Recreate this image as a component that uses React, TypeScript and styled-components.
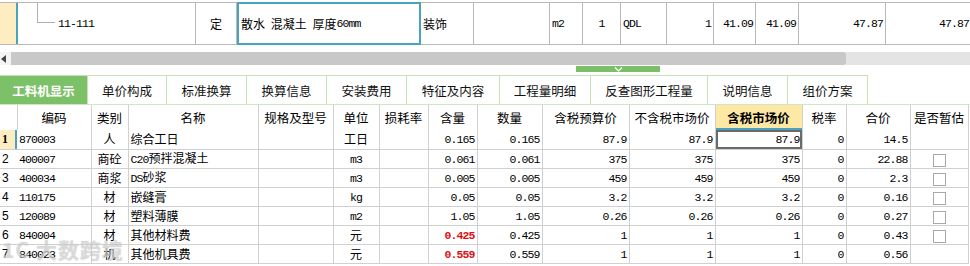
import React from "react";
import styled, { createGlobalStyle } from "styled-components";

const GlobalStyle = createGlobalStyle`
    html, body {
        margin: 0;
        padding: 0;
        background: #ffffff;
    }
    body {
        width: 970px;
        height: 266px;
        overflow: hidden;
        font-family: "Noto Sans CJK SC", "Liberation Sans", sans-serif;
        font-size: 12px;
        color: #000;
    }
`;

const Page = styled.div`
    position: relative;
    width: 970px;
    height: 266px;
    overflow: hidden;
`;

/* ---------- upper grid (scrolled) ---------- */

const TopGrid = styled.div`
    display: flex;
    height: 41px;
    margin-top: 2px;
    border-top: 1px solid #b8b8b8;
    border-bottom: 1px solid #b8b8b8;
`;

const TopCell = styled.div<{ $w: number; $align?: string; $pad?: number }>`
    position: relative;
    flex: 0 0 ${p => p.$w}px;
    box-sizing: border-box;
    border-right: 1px solid #b8b8b8;
    display: flex;
    align-items: center;
    justify-content: ${p => p.$align || "flex-start"};
    padding: 0 ${p => p.$pad ?? 2}px;
    white-space: nowrap;
    overflow: hidden;
`;

const TopGutter = styled.div`
    flex: 0 0 16px;
    background: #fdedc0;
    border-right: 2px solid #4aa3bd;
`;

const SelectedTopCell = styled(TopCell)`
    border: 2px solid #4aa3bd;
    margin: -1px 0;
    word-spacing: 3px;
`;

const TreeLine = styled.div`
    position: absolute;
    left: 19px;
    top: -2px;
    width: 17px;
    height: 21px;
    border-left: 1px solid #b0b0b0;
    border-bottom: 1px solid #b0b0b0;
`;

const Num = styled.span<{ $red?: boolean }>`
    font-family: "Liberation Mono", monospace;
    font-size: 11.5px;
    letter-spacing: -0.9px;
    word-spacing: 0;
    color: ${p => (p.$red ? "#e01010" : "#000")};
    font-weight: ${p => (p.$red ? "bold" : "normal")};
`;

/* ---------- scroll bar + splitter ---------- */

const ScrollBar = styled.div`
    display: flex;
    height: 13px;
    margin-top: 7px;
`;

const ScrollArrow = styled.div`
    flex: 0 0 11px;
    display: flex;
    align-items: center;
    justify-content: flex-start;
    padding-left: 1px;
    box-sizing: border-box;
    background: #f4f4f4;
`;

const ScrollThumb = styled.div`
    flex: 0 0 835px;
    background: #c8c8c8;
    border-radius: 0 2px 2px 0;
`;

const ScrollTrack = styled.div`
    flex: 1;
    background: #e4e4e4;
`;

const Splitter = styled.div`
    height: 10px;
    display: flex;
    align-items: flex-start;
    padding-left: 576px;
`;

const SplitHandle = styled.div`
    width: 84px;
    height: 6px;
    margin-top: 1px;
    background: #7dbf69;
    display: flex;
    justify-content: center;
    align-items: center;
`;

/* ---------- tabs ---------- */

const TabBar = styled.div`
    display: flex;
    height: 30px;
    border-bottom: 1px solid #cfe6c3;
    box-sizing: border-box;
`;

const Tab = styled.div<{ $w: number; $active?: boolean }>`
    flex: 0 0 ${p => p.$w}px;
    box-sizing: border-box;
    border-top: 1px solid #c5e3b5;
    border-right: 1px solid #c5e3b5;
    display: flex;
    align-items: center;
    justify-content: center;
    font-size: 12.5px;
    background: ${p => (p.$active ? "#7cc068" : "#ffffff")};
    color: ${p => (p.$active ? "#ffffff" : "#111")};
    font-weight: ${p => (p.$active ? "bold" : "normal")};
`;

/* ---------- lower table ---------- */

const Table = styled.table`
    border-collapse: collapse;
    table-layout: fixed;
    width: 968px;
`;

const Th = styled.th<{ $hl?: boolean }>`
    height: 25px;
    padding: 0;
    font-weight: ${p => (p.$hl ? "bold" : "normal")};
    font-size: 12.5px;
    line-height: 16px;
    text-align: center;
    border-right: 1px solid #d0d0d0;
    background: ${p => (p.$hl ? "#fde8a6" : "#ffffff")};
    box-shadow: ${p => (p.$hl ? "inset 0 -2px 0 #4aa3bd" : "none")};
    white-space: nowrap;
    overflow: hidden;
`;

const Tr = styled.tr`
    height: 19px;
`;

const Td = styled.td<{ $align?: string; $sel?: boolean }>`
    height: 18px;
    padding: 0 2px;
    border: 1px solid #d0d0d0;
    border-top: none;
    border-left: none;
    text-align: ${p => p.$align || "left"};
    white-space: nowrap;
    overflow: hidden;
    line-height: 16px;
    box-shadow: ${p => (p.$sel ? "inset 0 0 0 2px #6a6a6a" : "none")};
`;

const RowNo = styled.td<{ $cur?: boolean }>`
    height: 18px;
    padding: 0 0 0 2px;
    line-height: 16px;
    border-bottom: 1px solid #d0d0d0;
    font-family: ${p => (p.$cur ? '"Liberation Serif", serif' : '"Liberation Sans", sans-serif')};
    font-weight: ${p => (p.$cur ? "bold" : "normal")};
    font-size: 12px;
    background: ${p => (p.$cur ? "#fdedc0" : "#ffffff")};
    box-shadow: ${p => (p.$cur ? "inset -2px 0 0 #4aa3bd" : "none")};
`;

const Check = styled.span`
    display: inline-block;
    width: 11px;
    height: 11px;
    border: 1px solid #a8a8a8;
    background: #fff;
    vertical-align: middle;
`;

const Watermark = styled.div`
    position: absolute;
    left: 2px;
    top: 234px;
    font-size: 21px;
    font-weight: bold;
    letter-spacing: 1px;
    color: rgba(235, 235, 235, 0.55);
    text-shadow: 0 0 1px rgba(120, 120, 120, 0.45);
    pointer-events: none;
`;

const colWidths = [17, 74, 37, 130, 75, 46, 49, 49, 65, 87, 86, 87, 44, 64, 58];

const headers = ["", "编码", "类别", "名称", "规格及型号", "单位", "损耗率", "含量", "数量", "含税预算价", "不含税市场价", "含税市场价", "税率", "合价", "是否暂估"];

interface Row {
    code: string;
    kind: string;
    name: string;
    unit: string;
    amount: string;
    qty: string;
    budget: string;
    market: string;
    marketTax: string;
    total: string;
    check: boolean;
    red?: boolean;
}

const rows: Row[] = [
    { code: "870003", kind: "人", name: "综合工日", unit: "工日", amount: "0.165", qty: "0.165", budget: "87.9", market: "87.9", marketTax: "87.9", total: "14.5", check: false },
    { code: "400007", kind: "商砼", name: "C20预拌混凝土", unit: "m3", amount: "0.061", qty: "0.061", budget: "375", market: "375", marketTax: "375", total: "22.88", check: true },
    { code: "400034", kind: "商浆", name: "DS砂浆", unit: "m3", amount: "0.005", qty: "0.005", budget: "459", market: "459", marketTax: "459", total: "2.3", check: true },
    { code: "110175", kind: "材", name: "嵌缝膏", unit: "kg", amount: "0.05", qty: "0.05", budget: "3.2", market: "3.2", marketTax: "3.2", total: "0.16", check: true },
    { code: "120089", kind: "材", name: "塑料薄膜", unit: "m2", amount: "1.05", qty: "1.05", budget: "0.26", market: "0.26", marketTax: "0.26", total: "0.27", check: true },
    { code: "840004", kind: "材", name: "其他材料费", unit: "元", amount: "0.425", qty: "0.425", budget: "1", market: "1", marketTax: "1", total: "0.43", check: true, red: true },
    { code: "840023", kind: "机", name: "其他机具费", unit: "元", amount: "0.559", qty: "0.559", budget: "1", market: "1", marketTax: "1", total: "0.56", check: false, red: true },
];

const tabs = [
    { label: "工料机显示", w: 88 },
    { label: "单价构成", w: 79 },
    { label: "标准换算", w: 80 },
    { label: "换算信息", w: 80 },
    { label: "安装费用", w: 80 },
    { label: "特征及内容", w: 93 },
    { label: "工程量明细", w: 91 },
    { label: "反查图形工程量", w: 117 },
    { label: "说明信息", w: 80 },
    { label: "组价方案", w: 80 },
];

// names like "C20预拌混凝土" mix latin and CJK: split so latin gets the narrow mono face
function Text({ v }: { v: string }) {
    const parts = v.split(/([\u4e00-\u9fff]+)/).filter(Boolean);
    return (
        <>
            {parts.map((p, i) => (/[\u4e00-\u9fff]/.test(p) ? <span key={i}>{p}</span> : <Num key={i}>{p}</Num>))}
        </>
    );
}

export default function App() {
    return (
        <Page>
            <GlobalStyle />
            <TopGrid>
                <TopGutter />
                <TopCell $w={178} $pad={40}>
                    <TreeLine />
                    <Num>11-111</Num>
                </TopCell>
                <TopCell $w={41} $align="center">定</TopCell>
                <SelectedTopCell $w={184}>散水 混凝土 厚度<Num>60mm</Num></SelectedTopCell>
                <TopCell $w={53}>装饰</TopCell>
                <TopCell $w={76} />
                <TopCell $w={33}><Num>m2</Num></TopCell>
                <TopCell $w={38} $align="center"><Num>1</Num></TopCell>
                <TopCell $w={46}><Num>QDL</Num></TopCell>
                <TopCell $w={47} $align="flex-end"><Num>1</Num></TopCell>
                <TopCell $w={42} $align="flex-end"><Num>41.09</Num></TopCell>
                <TopCell $w={43} $align="flex-end"><Num>41.09</Num></TopCell>
                <TopCell $w={87} $align="flex-end"><Num>47.87</Num></TopCell>
                <TopCell $w={86} $align="flex-end"><Num>47.87</Num></TopCell>
            </TopGrid>

            <ScrollBar>
                <ScrollArrow>
                    <svg width="5" height="8" viewBox="0 0 5 8">
                        <path d="M5 0 L0 4 L5 8 Z" fill="#444" />
                    </svg>
                </ScrollArrow>
                <ScrollThumb />
                <ScrollTrack />
            </ScrollBar>

            <Splitter>
                <SplitHandle>
                    <svg width="9" height="5" viewBox="0 0 9 5">
                        <path d="M1 0.5 L4.5 4 L8 0.5" stroke="#ffffff" strokeWidth="1.2" fill="none" />
                    </svg>
                </SplitHandle>
            </Splitter>

            <TabBar>
                {tabs.map((t, i) => (
                    <Tab key={t.label} $w={t.w} $active={i === 0}>{t.label}</Tab>
                ))}
            </TabBar>

            <Table>
                <colgroup>
                    {colWidths.map((w, i) => <col key={i} style={{ width: w }} />)}
                </colgroup>
                <thead>
                    <tr>
                        {headers.map((h, i) => (
                            <Th key={i} $hl={h === "含税市场价"}>{h}</Th>
                        ))}
                    </tr>
                </thead>
                <tbody>
                    {rows.map((r, i) => (
                        <Tr key={r.code}>
                            <RowNo $cur={i === 0}>{i + 1}</RowNo>
                            <Td><Num>{r.code}</Num></Td>
                            <Td $align="center">{r.kind}</Td>
                            <Td><Text v={r.name} /></Td>
                            <Td />
                            <Td $align="center"><Text v={r.unit} /></Td>
                            <Td />
                            <Td $align="right"><Num $red={r.red}>{r.amount}</Num></Td>
                            <Td $align="right"><Num>{r.qty}</Num></Td>
                            <Td $align="right"><Num>{r.budget}</Num></Td>
                            <Td $align="right"><Num>{r.market}</Num></Td>
                            <Td $align="right" $sel={i === 0}><Num>{r.marketTax}</Num></Td>
                            <Td $align="right"><Num>0</Num></Td>
                            <Td $align="right"><Num>{r.total}</Num></Td>
                            <Td $align="center">{r.check && <Check />}</Td>
                        </Tr>
                    ))}
                </tbody>
            </Table>

            <Watermark>1C 大数跨境</Watermark>
        </Page>
    );
}
